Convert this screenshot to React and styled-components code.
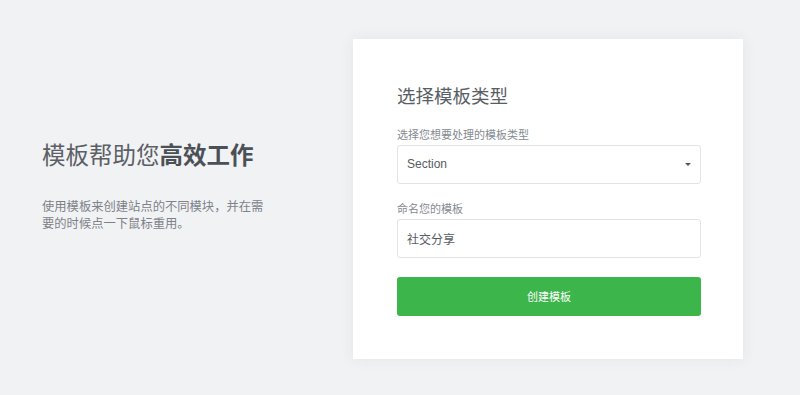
import React, { useState } from 'react'
import styled, { createGlobalStyle } from 'styled-components'

const FONT = `"Liberation Sans", "Noto Sans CJK SC", sans-serif`

/* -----------------------------------------------------COMPONENT------------------------------------------------ */

export default function App() {
  const [type, setType] = useState('Section')
  const [name, setName] = useState('社交分享')

  return (
    <>
      <GlobalStyle />
      <Page>
        <Intro>
          <Headline>
            模板帮助您<strong>高效工作</strong>
          </Headline>
          <Lead>使用模板来创建站点的不同模块，并在需要的时候点一下鼠标重用。</Lead>
        </Intro>

        <Card>
          <CardTitle>选择模板类型</CardTitle>

          <Field>
            <Label htmlFor="tpl-type">选择您想要处理的模板类型</Label>
            <SelectWrap>
              <Select id="tpl-type" value={type} onChange={(e) => setType(e.target.value)}>
                <option>Section</option>
                <option>Page</option>
                <option>Header</option>
                <option>Footer</option>
              </Select>
              <Caret />
            </SelectWrap>
          </Field>

          <Field>
            <Label htmlFor="tpl-name">命名您的模板</Label>
            <Input id="tpl-name" value={name} onChange={(e) => setName(e.target.value)} />
          </Field>

          <Submit type="button">创建模板</Submit>
        </Card>
      </Page>
    </>
  )
}

/* -----------------------------------------------------STYLE------------------------------------------------ */

const GlobalStyle = createGlobalStyle`
  * { box-sizing: border-box; }
  html, body { margin: 0; padding: 0; }
  body {
    background: #f1f2f4;
    font-family: ${FONT};
    -webkit-font-smoothing: antialiased;
  }
`

const Page = styled.div`
  min-height: 395px;
  display: flex;
  align-items: center;
  padding: 0 57px 0 42px;
`

const Intro = styled.div`
  flex: 1;
  padding-bottom: 20px;
`

const Headline = styled.h1`
  margin: 0 0 28px;
  font-size: 23.5px;
  line-height: 1.2;
  font-weight: 400;
  color: #5b6066;

  strong {
    font-weight: 700;
    color: #4b5056;
  }
`

const Lead = styled.p`
  margin: 0;
  width: 232px;
  font-size: 12.3px;
  line-height: 17px;
  color: #7d8288;
`

const Card = styled.div`
  width: 390px;
  background: #fff;
  padding: 46px 42px 43px 44px;
  box-shadow: 0 0 14px rgba(40, 50, 60, 0.07);
  margin-top: 2px;
`

const CardTitle = styled.h2`
  margin: 0 0 20px;
  font-size: 18.5px;
  line-height: 23px;
  font-weight: 400;
  color: #595e64;
`

const Field = styled.div`
  display: flex;
  flex-direction: column;
  gap: 2px;
  margin-bottom: 18px;
`

const Label = styled.label`
  font-size: 11px;
  line-height: 15px;
  color: #868b91;
`

const SelectWrap = styled.div`
  position: relative;
`

const controlStyle = `
  width: 100%;
  height: 39px;
  padding: 0 9px;
  border: 1px solid #e1e3e6;
  border-radius: 3px;
  background: #fff;
  font-family: ${FONT};
  font-size: 12px;
  color: #575c62;
  outline: none;
`

const Select = styled.select`
  ${controlStyle}
  appearance: none;
  cursor: pointer;
`

const Caret = styled.span`
  position: absolute;
  right: 10px;
  top: 18px;
  width: 0;
  height: 0;
  border-left: 3px solid transparent;
  border-right: 3px solid transparent;
  border-top: 3px solid #555;
  pointer-events: none;
`

const Input = styled.input`
  ${controlStyle}
`

const Submit = styled.button`
  display: block;
  width: 100%;
  height: 39px;
  margin-top: 19px;
  border: 0;
  border-radius: 3px;
  background: #3cb54a;
  color: #fff;
  font-family: ${FONT};
  font-size: 11px;
  cursor: pointer;
`
